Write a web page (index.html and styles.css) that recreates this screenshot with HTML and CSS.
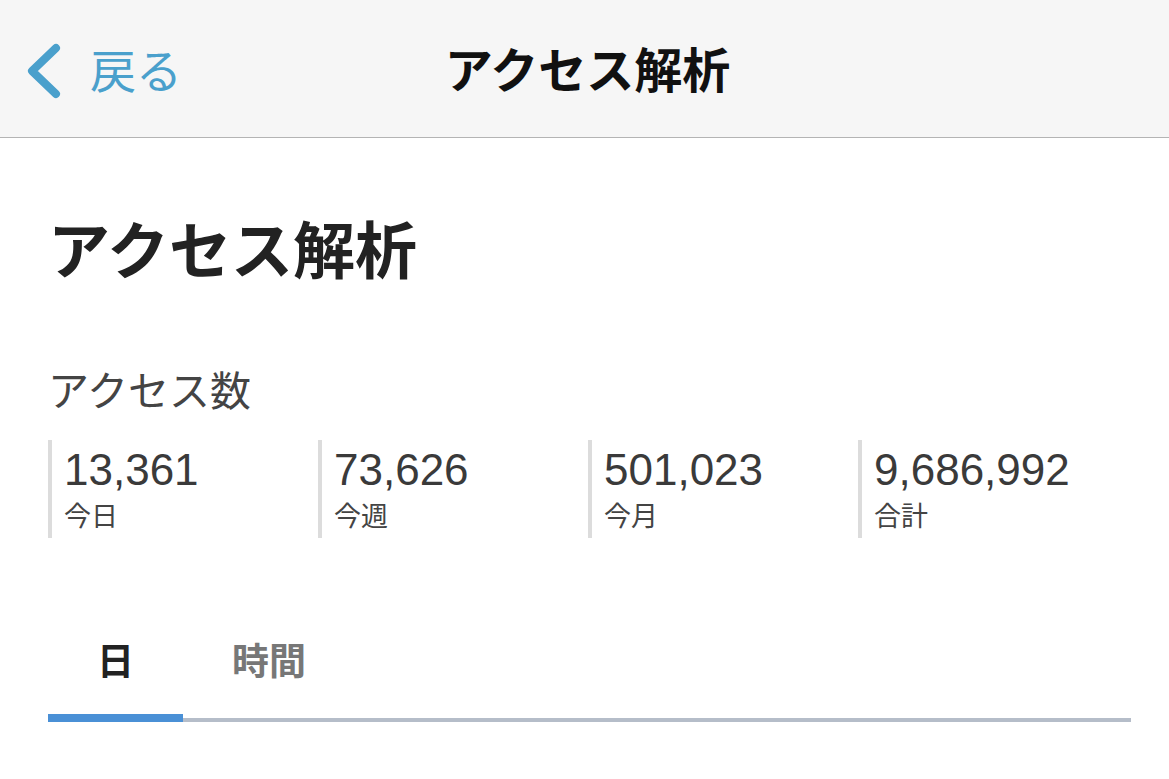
FILE: index.html
```html
<!DOCTYPE html>
<html lang="ja">
<head>
    <meta charset="UTF-8">
    <meta name="viewport" content="width=device-width, initial-scale=1.0">
    <title>アクセス解析</title>
    <link rel="stylesheet" href="styles.css">
</head>
<body>
    <header class="navbar">
        <a class="back" href="#">
            <svg class="chevron" width="40" height="60" viewBox="0 0 40 60">
                <path d="M32 7 L8 30 L32 53" fill="none" stroke="#4aa0cc" stroke-width="8" stroke-linecap="round" stroke-linejoin="round"/>
            </svg>
            <span>戻る</span>
        </a>
        <div class="nav-title">アクセス解析</div>
        <div></div>
    </header>

    <main class="content">
        <h1>アクセス解析</h1>
        <h2>アクセス数</h2>
        <div class="stats">
            <div class="stat">
                <div class="num">13,361</div>
                <div class="label">今日</div>
            </div>
            <div class="stat">
                <div class="num">73,626</div>
                <div class="label">今週</div>
            </div>
            <div class="stat">
                <div class="num">501,023</div>
                <div class="label">今月</div>
            </div>
            <div class="stat">
                <div class="num">9,686,992</div>
                <div class="label">合計</div>
            </div>
        </div>

        <div class="tabs">
            <div class="tab active">日</div>
            <div class="tab">時間</div>
        </div>
    </main>
</body>
</html>
```

FILE: styles.css
```css
body {
    margin: 0;
    font-family: "Liberation Sans", "Noto Sans CJK JP", sans-serif;
    background-color: #fff;
    color: #222;
}
.navbar {
    height: 131px;
    padding-top: 6px;
    background-color: #f6f6f6;
    border-bottom: 1px solid #b4b4b4;
    display: grid;
    grid-template-columns: 1fr auto 1fr;
    align-items: center;
}
.back {
    display: flex;
    align-items: center;
    gap: 26px;
    padding-left: 24px;
    color: #4aa0cc;
    text-decoration: none;
    font-size: 46px;
    line-height: 1;
}
.chevron {
    margin-top: -2px;
}
.nav-title {
    font-size: 48px;
    font-weight: bold;
    color: #111;
    line-height: 1;
    padding-left: 6px;
}
.content {
    padding: 0 38px 0 48px;
}
h1 {
    margin: 84px 0 0;
    font-size: 62px;
    line-height: 1;
    font-weight: bold;
    color: #222;
}
h2 {
    margin: 88px 0 0;
    font-size: 41px;
    line-height: 1;
    font-weight: normal;
    color: #444;
}
.stats {
    display: grid;
    grid-template-columns: repeat(4, 270px);
    margin-top: 27px;
}
.stat {
    border-left: 4px solid #dcdcdc;
    padding: 6px 0 4px 12px;
}
.num {
    font-size: 44px;
    line-height: 48px;
    color: #3a3a3a;
}
.label {
    margin-top: 7px;
    font-size: 27px;
    line-height: 33px;
    color: #444;
}
.tabs {
    display: flex;
    margin-top: 100px;
    border-bottom: 4px solid #b5bdc9;
}
.tab {
    position: relative;
    padding: 0 49px 30px;
    font-size: 37px;
    font-weight: bold;
    line-height: 50px;
    color: #777;
}
.tab.active {
    color: #222;
}
.tab.active::after {
    content: "";
    position: absolute;
    left: 0;
    right: 0;
    bottom: -4px;
    height: 8px;
    background-color: #4a90d6;
}
```
